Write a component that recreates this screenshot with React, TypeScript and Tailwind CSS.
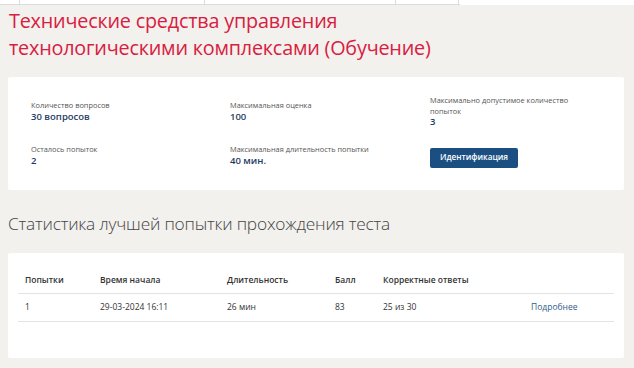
import React from "react";

const font = { fontFamily: '"Open Sans", "Noto Sans", sans-serif' };

const stats = [
  { label: "Количество вопросов", value: "30 вопросов" },
  { label: "Максимальная оценка", value: "100" },
  { label: "Максимально допустимое количество попыток", value: "3" },
  { label: "Осталось попыток", value: "2" },
  { label: "Максимальная длительность попытки", value: "40 мин." },
];

export default function App() {
  return (
    <div className="w-[634px] h-[368px] overflow-hidden bg-white text-[#333]" style={font}>
      {/* top tabs strip */}
      <div className="flex h-[5px] w-[460px] border-b border-[#dcdcdc]">
        <div className="w-[20px] border-r border-[#dcdcdc]" />
        <div className="w-[185px] border-r border-[#dcdcdc]" />
        <div className="w-[191px] border-r border-[#dcdcdc]" />
        <div className="w-[63px] border-r border-[#dcdcdc]" />
      </div>

      <div className="bg-[#f2f1ee] h-full pl-[8px] pr-[10px]">
        <h1 className="pl-[1px] pt-[2px] text-[19.8px] leading-[27px] font-medium text-[#d8203f] tracking-[-0.2px]">
          Технические средства управления
          <br />
          технологическими комплексами (Обучение)
        </h1>

        {/* info card */}
        <div className="mt-[16px] bg-white rounded-[2px] h-[113px] pl-[23px] pt-[16px]">
          <div className="grid grid-cols-[199px_200px_150px] grid-rows-[36px_24px] gap-y-[14px] items-center">
            {stats.map((s) => (
              <div key={s.label}>
                <div className="text-[7.4px] leading-[10.5px] text-[#555]">{s.label}</div>
                <div className="text-[9.5px] leading-[11px] font-semibold text-[#1f3b63]">{s.value}</div>
              </div>
            ))}
            <div>
              <button className="h-[20px] w-[88px] rounded-[2px] bg-[#1b4f82] text-white text-[8.2px] font-semibold">
                Идентификация
              </button>
            </div>
          </div>
        </div>

        <h2 className="mt-[22px] text-[17.3px] leading-[24px] font-light text-[#444] tracking-[-0.2px]">
          Статистика лучшей попытки прохождения теста
        </h2>

        {/* results card */}
        <div className="mt-[17px] bg-white rounded-[2px] h-[105px] px-[10px] pt-[16px]">
          <table className="w-full text-left text-[8.5px] text-[#333] border-collapse">
            <colgroup>
              <col className="w-[75px]" />
              <col className="w-[127px]" />
              <col className="w-[108px]" />
              <col className="w-[48px]" />
              <col className="w-[148px]" />
              <col />
            </colgroup>
            <thead>
              <tr className="border-b border-[#e3e3e3] h-[24px]">
                <th className="pl-[7px] font-semibold">Попытки</th>
                <th className="pl-[7px] font-semibold">Время начала</th>
                <th className="pl-[7px] font-semibold">Длительность</th>
                <th className="pl-[7px] font-semibold">Балл</th>
                <th className="pl-[7px] font-semibold">Корректные ответы</th>
                <th />
              </tr>
            </thead>
            <tbody>
              <tr className="border-b border-[#e3e3e3] h-[28px]">
                <td className="pl-[7px]">1</td>
                <td className="pl-[7px]">29-03-2024 16:11</td>
                <td className="pl-[7px]">26 мин</td>
                <td className="pl-[7px]">83</td>
                <td className="pl-[7px]">25 из 30</td>
                <td className="pl-[7px] text-[#2f5d8c]">Подробнее</td>
              </tr>
            </tbody>
          </table>
        </div>
      </div>
    </div>
  );
}
